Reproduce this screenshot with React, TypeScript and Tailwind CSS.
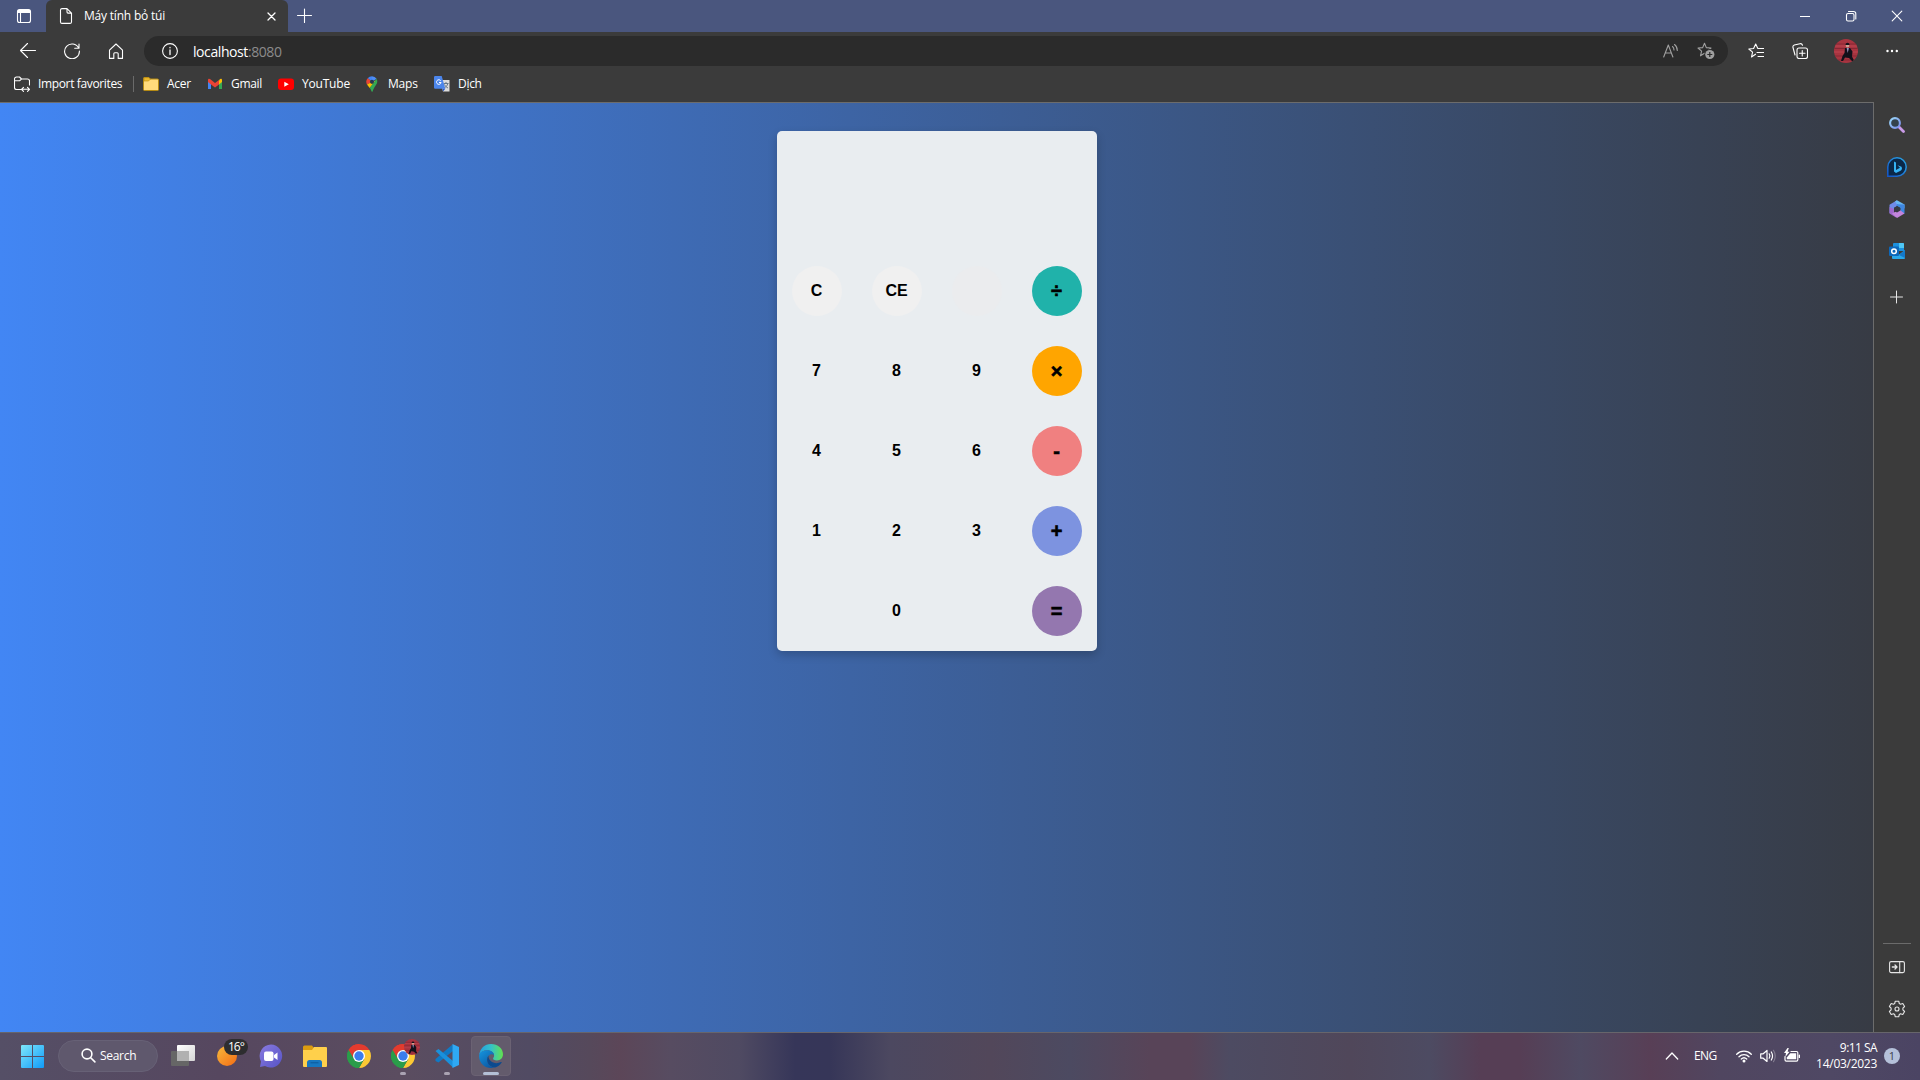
import React from "react";

type IconProps = { className?: string };

const stroke = {
  fill: "none",
  stroke: "currentColor",
  strokeWidth: 1.1,
  strokeLinecap: "round" as const,
  strokeLinejoin: "round" as const,
};

function Svg({ className = "", size = 16, children }: { className?: string; size?: number; children: React.ReactNode }) {
  return (
    <svg className={`shrink-0 ${className}`} width={size} height={size} viewBox={`0 0 ${size} ${size}`}>
      {children}
    </svg>
  );
}

const STAR = "M7.5 1.2 9.3 5.6 14 6 10.4 9.1 11.5 13.8 7.5 11.3 3.5 13.8 4.6 9.1 1 6 5.7 5.6Z";

function Portrait({ className = "" }: IconProps) {
  return (
    <svg className={`shrink-0 ${className}`} viewBox="0 0 24 24">
      <clipPath id="face">
        <circle cx="12" cy="12" r="12" />
      </clipPath>
      <g clipPath="url(#face)">
        <rect width="24" height="24" fill="#a83440" />
        <path d="M0 5h24M0 9.500h24M0 17h24M0 21h24" stroke="#862834" strokeWidth="1" />
        <path d="M0 7h24M0 13h24" stroke="#bd4450" strokeWidth="1" />
        <circle cx="13.500" cy="6.800" r="1.800" fill="#c9a18f" />
        <path d="M11.500 6c0-3 4-3 4 0zM11 9h5l2.500 3.500-.5 5 2 4-1.500 1-3.500-3.500-4-.5-2 3.500H7l1.500-5 2-3z" fill="#11101a" />
        <path d="m12.700 9 1 5 1.200-5z" fill="#9a94c4" />
      </g>
    </svg>
  );
}

function ChromeLogo() {
  return (
    <svg className="size-6 shrink-0" viewBox="0 0 24 24">
      <path d="M12 6h10.390A12 12 0 0 1 12 24l5.200-9z" fill="#fcc934" />
      <path d="M1.610 6 6.800 15 12 12l5.200 3L12 24A12 12 0 0 1 1.610 6z" fill="#2a9d4a" />
      <path d="M1.610 6A12 12 0 0 1 22.390 6H12a6 6 0 0 0-5.200 3v6z" fill="#e33b2e" />
      <path d="M1.610 6 6.800 15V9z" fill="#2a9d4a" />
      <path d="M1.610 6A12 12 0 0 1 12 0v6a6 6 0 0 0-5.500 3.700L6.200 14z" fill="#e33b2e" />
      <path d="M1.610 6 6.800 15 12 24A12 12 0 0 1 1.610 6z" fill="#2a9d4a" />
      <circle cx="12" cy="12" r="6" fill="#fff" />
      <circle cx="12" cy="12" r="4.700" fill="#3b7ded" />
    </svg>
  );
}

function EdgeLogo() {
  return (
    <svg className="size-6 shrink-0" viewBox="0 0 24 24">
      <defs>
        <linearGradient id="edgeTop" x1="0" y1="0.500" x2="1" y2="0.500">
          <stop offset="0" stopColor="#249fe0" />
          <stop offset="0.500" stopColor="#35c1c8" />
          <stop offset="1" stopColor="#62e24d" />
        </linearGradient>
        <linearGradient id="edgeLow" x1="0" y1="0" x2="0.700" y2="1">
          <stop offset="0" stopColor="#1595df" />
          <stop offset="1" stopColor="#0c59a4" />
        </linearGradient>
      </defs>
      <path d="M.2 11C1 4.500 5.500 0 12 0c7 0 12 4.700 12 10.200 0 3.800-2.800 6.200-6 6.200-2.600 0-4.200-1-3.900-1.900.3-.8 1-1.300 1-2.900C15.100 8.500 11.800 6.300 8.200 6.300 4.500 6.300 1.500 8 .2 11Z" fill="url(#edgeTop)" />
      <path d="M.1 12C.2 8.500 4 6.300 8.200 6.300c3.700 0 6.500 2 6.900 4.600C11.500 9 8.300 12 8.300 15.500c0 4.200 3.200 7.500 7 8.100C8 25.500 0 20.500.1 12Z" fill="url(#edgeLow)" />
      <path d="M9.400 11.600c-3.300 5 .3 12 6.700 12 2.500-.6 5-2.500 6.600-5 .2-.5-.2-.7-.6-.5-5.800 2.800-12.700 0-12.700-6.500Z" fill="#0b4a8f" />
    </svg>
  );
}

function TitleBar() {
  return (
    <div className="flex h-8 shrink-0 items-center bg-[#4a567e] text-white">
      <Svg className="ml-4">
        <rect x="1.500" y="1.500" width="13" height="13" rx="2" {...stroke} />
        <path d="M2 2h12v3H2z" fill="currentColor" />
        <path d="M4.500 4v10" {...stroke} />
      </Svg>
      <div className="ml-[14px] flex h-full w-[242px] items-center rounded-t-md bg-[#3b3b3b]">
        <Svg className="ml-3">
          <path d="M2.500 2A1.500 1.500 0 0 1 4 .6h5l4.500 4.500v8.900a1.500 1.500 0 0 1-1.500 1.400H4A1.500 1.500 0 0 1 2.500 14ZM9 .6v3.500a1 1 0 0 0 1 1h3.500" {...stroke} />
        </Svg>
        <span className="ml-[10px] w-[168px] text-xs tracking-[-0.200px]">Máy tính bỏ túi</span>
        <Svg className="ml-[11px]" size={16}>
          <path d="m5 5 7 7M12 5l-7 7" {...stroke} strokeWidth={1.300} />
        </Svg>
      </div>
      <Svg className="ml-[9px]">
        <path d="M7.500 1v13.500M.5 7.500h14" {...stroke} />
      </Svg>
      <div className="flex-1" />
      <div className="flex items-center gap-[30px] pr-[15px]">
        <Svg>
          <path d="M3 8.500h10" {...stroke} strokeLinecap="butt" strokeWidth={1} />
        </Svg>
        <Svg>
          <rect x="3.500" y="5.500" width="7.500" height="7.500" rx="1.500" {...stroke} />
          <path d="M5.500 3.500h5a2.300 2.300 0 0 1 2.300 2.300V11" {...stroke} />
        </Svg>
        <Svg>
          <path d="m3.200 3.200 9.600 9.600M12.800 3.200l-9.600 9.600" {...stroke} />
        </Svg>
      </div>
    </div>
  );
}

function Toolbar() {
  return (
    <div className="flex h-[38px] shrink-0 items-center text-white">
      <Svg className="ml-5">
        <path d="M15.500 7.500H.6M7.500 .5l-7 7 7 7" {...stroke} />
      </Svg>
      <Svg className="ml-7">
        <path d="M14.700 5.200A7.400 7.400 0 1 0 15.400 8M15 1v4.300h-4.300" {...stroke} />
      </Svg>
      <Svg className="ml-7">
        <path d="M1.500 7.200 8 1l6.500 6.200v8.200h-4.300v-4.600a1 1 0 0 0-1-1H6.800a1 1 0 0 0-1 1v4.600H1.500Z" {...stroke} />
      </Svg>
      <div className="ml-5 flex h-[30px] w-[1584px] items-center rounded-full bg-[#2b2b2b]">
        <Svg className="ml-[18px]">
          <circle cx="8" cy="8" r="7.400" {...stroke} />
          <path d="M8 7v4.500M8 4.500v.3" {...stroke} strokeWidth={1.300} />
        </Svg>
        <span className="ml-[15px] flex-1 text-[14px] tracking-[-0.420px]">
          localhost<span className="text-[#8c8c8c]">:8080</span>
        </span>
        <Svg className="-mr-0.5 text-[#a0a0a0]">
          <path d="m.7 14 4.600-12L9.900 14M2.400 10h5.800M9.500 3.500c1.200 1 1.500 2 1.500 3.500M11.500 1.500c2 1.500 2.800 3 2.800 6" {...stroke} />
        </Svg>
        <Svg className="mr-[13px] ml-5 text-[#a0a0a0]" size={18}>
          <path d={STAR} {...stroke} />
          <circle cx="12.800" cy="12.500" r="5.500" fill="#2b2b2b" />
          <circle cx="12.800" cy="12.500" r="4.600" fill="currentColor" />
          <path d="M12.800 10v5M10.300 12.500h5" stroke="#2b2b2b" strokeWidth="1.200" />
        </Svg>
      </div>
      <Svg className="ml-5">
        <path d="M7.500 11.200 3.500 14 4.600 9.200.8 6l4.800-.5L7.700 1l2 4.200M10 5.500h5.700M9 9.500h6.700M10 13.500h5.700" {...stroke} />
      </Svg>
      <Svg className="ml-7">
        <rect x="5" y="5" width="10.500" height="10.500" rx="2" {...stroke} />
        <path d="M10.250 7.500v5.500M7.500 10.250H13M3 12 1 4.500Q.5 2.700 2.300 2L8 .7q1.800-.4 2.500 1.500" {...stroke} />
      </Svg>
      <Portrait className="ml-[26px] size-6" />
      <Svg className="ml-[26px]">
        <path d="M3.500 8h0M8 8h0M12.800 8h0" {...stroke} strokeWidth={2.400} />
      </Svg>
    </div>
  );
}

function BookmarksBar() {
  return (
    <div className="flex h-[29px] shrink-0 items-center pb-px text-xs whitespace-nowrap text-white">
      <Svg className="ml-[14px]">
        <path d="M7 13.500H2.500a2 2 0 0 1-2-2V3a2 2 0 0 1 2-2h3L7.500 3h6a2 2 0 0 1 2 2v4M.5 4.800h5L7.500 3M7.500 13.300h8M9.500 11.300l-2 2 2 2M13.500 11.300l2 2-2 2" {...stroke} />
      </Svg>
      <span className="ml-2 w-[95px] tracking-[-0.360px]">Import favorites</span>
      <div className="h-4 w-px bg-[#6a6a6a]" />
      <Svg className="ml-[9px]">
        <path d="M.5 2.500a1 1 0 0 1 1-1h4l2 1.500h7a1 1 0 0 1 1 1v9.500a1 1 0 0 1-1 1h-13a1 1 0 0 1-1-1z" fill="#ffdb7b" stroke="#b58a13" />
        <path d="M1 5h4.500l2-2-2-1.300H1z" fill="#edb92e" stroke="#b58a13" strokeWidth=".6" />
      </Svg>
      <span className="ml-2 w-10 tracking-[-0.300px]">Acer</span>
      <Svg>
        <path d="M1 4v9h3V6z" fill="#4285f4" />
        <path d="M15 4v9h-3V6z" fill="#34a853" />
        <path d="M12 4.500 13 3q2-.8 2 1v2l-3 2.500z" fill="#fbbc04" />
        <path d="M1 6V4q0-1.800 2-1l5 3.900L12 4v4.500l-4 3-4-3z" fill="#ea4335" />
      </Svg>
      <span className="ml-2 w-[47px] tracking-[-0.300px]">Gmail</span>
      <Svg>
        <rect y="2.500" width="16" height="11.500" rx="3" fill="#f00" />
        <path d="m6.300 5.800 4.500 2.450-4.500 2.450z" fill="#fff" />
      </Svg>
      <span className="ml-2 w-[62px] tracking-[-0.200px]">YouTube</span>
      <Svg>
        <path d="M8 .2a5.600 5.600 0 0 0-4.300 2L8 5.800z" fill="#4285f4" />
        <path d="M3.700 2.200A5.700 5.700 0 0 0 3 8.600L8 5.800z" fill="#ea4335" />
        <path d="M3 8.600 5.700 12 12 4.500 8 5.800z" fill="#fbbc04" />
        <path d="M8 .2a5.600 5.600 0 0 1 4.600 2.500L8 6z" fill="#4d8df5" />
        <path d="M12.600 2.700c2.600 5-2.600 7-3.900 12.600-.2.700-1 .7-1.200 0-.3-1.400-1-2.500-1.800-3.300z" fill="#34a853" />
        <circle cx="8" cy="5.800" r="2.100" fill="#263850" />
      </Svg>
      <span className="ml-2 w-[46px] tracking-[-0.200px]">Maps</span>
      <Svg>
        <path d="M6 4h9.500v11.500H9z" fill="#dcdcdc" />
        <path d="M9.500 7.500h5M12 6v1.500M13.800 7.500c-.5 2.500-2 3.500-3.500 4.200M10.500 8.500c1 2 2 2.700 3.500 3.500" stroke="#66788a" fill="none" />
        <path d="M1.200 0h6.500l3.600 12.800H1.200A1.200 1.200 0 0 1 0 11.600V1.200A1.200 1.200 0 0 1 1.200 0" fill="#4c86ec" />
        <path d="M6.700 4.700a2.300 2.300 0 1 0 .4 1.800H5" stroke="#fff" fill="none" />
        <path d="M8.500 12.800h2.800L9 15.500z" fill="#2858c6" />
      </Svg>
      <span className="ml-2 tracking-[-0.300px]">Dịch</span>
    </div>
  );
}

function Key({ label, tone, op }: { label: string; tone: string; op?: boolean }) {
  return (
    <div className="flex size-20 items-center justify-center">
      <button
        className={`size-[50px] rounded-full text-center leading-[48px] font-bold text-black ${tone} ${op ? "text-[20px] [-webkit-text-stroke:0.6px_black]" : "text-base"}`}
      >
        {label}
      </button>
    </div>
  );
}

const plain = "bg-transparent";
const keys: { label: string; tone: string; op?: boolean }[] = [
  { label: "C", tone: "bg-[#f0f0f0]" },
  { label: "CE", tone: "bg-[#f0f0f0]" },
  { label: "", tone: "bg-[#ebecee]" },
  { label: "÷", tone: "bg-[#20b2aa]", op: true },
  { label: "7", tone: plain },
  { label: "8", tone: plain },
  { label: "9", tone: plain },
  { label: "×", tone: "bg-[#ffa500]", op: true },
  { label: "4", tone: plain },
  { label: "5", tone: plain },
  { label: "6", tone: plain },
  { label: "-", tone: "bg-[#f08080]", op: true },
  { label: "1", tone: plain },
  { label: "2", tone: plain },
  { label: "3", tone: plain },
  { label: "+", tone: "bg-[#7d93e0]", op: true },
  { label: "", tone: plain },
  { label: "0", tone: plain },
  { label: "", tone: plain },
  { label: "=", tone: "bg-[#9477af]", op: true },
];

function Calculator() {
  return (
    <div className="mt-7 h-[520px] w-80 rounded-[5px] bg-[#e9edf0] font-['Liberation_Sans',sans-serif] shadow-[0_4px_10px_rgba(0,0,0,0.2)]">
      <div className="h-[120px]" />
      <div className="grid grid-cols-4">
        {keys.map((k, i) => (
          <Key key={i} {...k} />
        ))}
      </div>
    </div>
  );
}

function Sidebar() {
  return (
    <aside className="flex w-[46px] shrink-0 flex-col items-center pt-[15px] text-[#e6e6e6]">
      <Svg>
        <defs>
          <linearGradient id="lens" x1="0" y1="0" x2="1" y2="1">
            <stop offset="0" stopColor="#9bd8f8" />
            <stop offset="1" stopColor="#7a8bea" />
          </linearGradient>
        </defs>
        <path d="m10 10 4.500 4.500" stroke="#c99be8" strokeWidth="2.800" strokeLinecap="round" />
        <circle cx="6" cy="6" r="4.900" fill="#34424c" stroke="url(#lens)" strokeWidth="2.100" />
      </Svg>
      <Svg className="mt-6" size={20}>
        <defs>
          <linearGradient id="bing" x1="0" y1="1" x2="1" y2="0">
            <stop offset="0" stopColor="#1455c8" />
            <stop offset="1" stopColor="#2aa8e8" />
          </linearGradient>
        </defs>
        <path d="M.8 19.200V10A9.200 9.200 0 1 1 10 19.200z" fill="#0b2848" stroke="url(#bing)" strokeWidth="1.500" />
        <path d="M7 4.500 9 5.500v7.500l4-2.200-2.500-2.500 4 1.500q1.300 2.700-1 4L9 16l-2-1.500z" fill="#35b3f4" />
      </Svg>
      <Svg className="mt-[23px]" size={18}>
        <path d="M1.500 4.800 9 .3v6L6 8v6l-4.500-1z" fill="#6f8ae8" />
        <path d="m7 1.500 2-1.200 7.500 4.300v4L9 4.500z" fill="#68b8f4" />
        <path d="M16.500 4.600v9l-4 .4V8L8 5.500l1-1.300z" fill="#3f86e0" />
        <path d="m1.500 7 4.500 2v4.500l3 1-1 3-6.500-4z" fill="#a068cc" />
        <path d="m4 13.500 7.500-3.700 5 3.700L9 17.900z" fill="#c384dc" />
        <path d="m9 6 3 1.700v3l-3 1.700-3-1.500V7.700z" fill="#363a44" />
      </Svg>
      <Svg className="mt-[25px]">
        <path d="M5 0h9a1 1 0 0 1 1 1v7H4V1a1 1 0 0 1 1-1" fill="#1d91de" />
        <path d="M10 0h4a1 1 0 0 1 1 1v4h-5z" fill="#4fc7f5" />
        <path d="m3 8 6.500 4L16 7v8a1 1 0 0 1-1 1H4a1 1 0 0 1-1-1z" fill="#29a8ea" />
        <path d="m10 12 6-5v8z" fill="#1479ca" />
        <rect y="3.500" width="10" height="9.500" rx="1" fill="#0d68ba" />
        <circle cx="5" cy="8.200" r="2.300" fill="none" stroke="#fff" strokeWidth="1.500" />
      </Svg>
      <Svg className="mt-[30px] -ml-[2px]">
        <path d="M8.500 2v12M2.500 8h12" {...stroke} strokeWidth={1} />
      </Svg>
      <div className="flex-1" />
      <div className="h-px w-7 bg-[#6b6b6b]" />
      <Svg className="mt-[15px] mb-[25px]">
        <rect x=".6" y="2.600" width="14.800" height="11" rx="1.500" {...stroke} />
        <path d="M10.700 2.600v11" {...stroke} />
        <path d="M3.300 8h4.500M6 6l2 2-2 2" {...stroke} strokeWidth={1.300} />
      </Svg>
      <Svg className="mb-[14px]" size={18}>
        <path
          d="M7.300 1.200h3.400l.6 2.300 1.200.7 2.300-.7 1.800 3-1.700 1.700v1.600l1.700 1.700-1.800 3-2.300-.7-1.200.7-.6 2.300H7.300l-.6-2.300-1.200-.7-2.300.7-1.800-3 1.700-1.700V8.200L1.400 6.500l1.800-3 2.300.7 1.200-.7z"
          {...stroke}
        />
        <circle cx="9" cy="9" r="2" {...stroke} />
      </Svg>
    </aside>
  );
}

function Taskbar() {
  return (
    <footer className="flex h-12 shrink-0 items-center border-t border-[#67656b] bg-[linear-gradient(90deg,#554f66_0px,#56475f_220px,#5b4d60_400px,#514b63_530px,#56495b_590px,#5c4658_620px,#574c61_670px,#4f4a62_740px,#363659_795px,#363658_830px,#4c4860_890px,#52475a_990px,#4c4a61_1070px,#584458_1150px,#584458_1190px,#4d4b62_1230px,#50475a_1350px,#4d4b62_1430px,#563e55_1480px,#563e55_1520px,#4f4a62_1580px,#583f56_1650px,#504660_1720px,#4f4864_1830px,#4b4463_1920px)] pb-px text-xs text-white">
      <Svg className="ml-[21px]" size={23}>
        <defs>
          <linearGradient id="win" x1="0" y1="0" x2="23" y2="23" gradientUnits="userSpaceOnUse">
            <stop offset="0" stopColor="#7ee7fb" />
            <stop offset="1" stopColor="#109bf8" />
          </linearGradient>
        </defs>
        <path d="M1 0h10v11H0V1a1 1 0 0 1 1-1M12 0h10a1 1 0 0 1 1 1v10H12zM0 12h11v11H1a1 1 0 0 1-1-1zM12 12h11v10a1 1 0 0 1-1 1H12z" fill="url(#win)" />
      </Svg>
      <div className="ml-[14px] flex h-8 w-[100px] items-center rounded-full border border-[#676176] bg-[#5f586d]">
        <Svg className="ml-[22px]">
          <circle cx="6" cy="6" r="4.900" {...stroke} strokeWidth={1.600} />
          <path d="m9.700 9.700 4.200 4.200" {...stroke} strokeWidth={1.600} />
        </Svg>
        <span className="ml-[3px] tracking-[-0.300px]">Search</span>
      </div>
      <Svg className="ml-[13px]" size={24}>
        <defs>
          <linearGradient id="tv" x1="0" y1="0" x2="1" y2="1">
            <stop offset="0" stopColor="#fff" />
            <stop offset="1" stopColor="#d5d5d5" />
          </linearGradient>
        </defs>
        <rect y="7" width="18" height="15" rx="1" fill="#666" />
        <rect x="6" y="1" width="18" height="16" rx="1" fill="url(#tv)" />
        <rect x="6" y="7" width="12" height="10" fill="#b1b1b1" />
      </Svg>
      <div className="relative ml-[22px] size-5 rounded-full bg-linear-to-br from-[#f5b83b] to-[#f26a12]">
        <span className="absolute top-[-7px] left-[7px] h-4 w-6 rounded-full bg-[#2d2d2f] text-center leading-4 tracking-[-0.900px]">16°</span>
      </div>
      <Svg className="ml-[22px]" size={24}>
        <defs>
          <linearGradient id="chat" x1="0" y1="0" x2="1" y2="1">
            <stop offset="0" stopColor="#8a7be0" />
            <stop offset="1" stopColor="#5653c6" />
          </linearGradient>
        </defs>
        <path d="M12 .5A11.500 11.500 0 1 1 6 22L1 23l1-5.500A11.500 11.500 0 0 1 12 .5" fill="url(#chat)" />
        <rect x="5" y="7.500" width="9.500" height="9.500" rx="2" fill="#fff" />
        <path d="m15 11 3.500-2.500v7.500L15 13.500z" fill="#fff" />
      </Svg>
      <Svg className="ml-5" size={24}>
        <path d="M0 3a1.500 1.500 0 0 1 1.500-1.500H9L11 4v4H0z" fill="#dc9c10" />
        <path d="M0 6h9l2-3h12a1 1 0 0 1 1 1v18a1 1 0 0 1-1 1H1a1 1 0 0 1-1-1z" fill="#ffd04b" />
        <path d="M4 23v-4.500A2.500 2.500 0 0 1 6.500 16h10a2.500 2.500 0 0 1 2.500 2.500V23z" fill="#1777c0" />
        <path d="M7.500 18.800h8" stroke="#0d5a9a" strokeWidth="1" />
      </Svg>
      <div className="ml-5 flex size-6">
        <ChromeLogo />
      </div>
      <div className="relative ml-5 size-6">
        <ChromeLogo />
        <Portrait className="absolute -top-[5px] left-[13px] size-4" />
        <div className="absolute top-[28px] left-[9px] h-[3px] w-1.5 rounded-full bg-[#aaa3b2]" />
      </div>
      <div className="relative ml-5 size-6">
        <Svg size={24}>
          <path d="M17.500.5 18 7 3.500 18.500.5 17v-2z" fill="#1079c4" />
          <path d="m.5 7 3-2L18 17v6.500z" fill="#1a91dc" />
          <path d="M17.500 0 24 3v18l-6.500 3z" fill="#2fa9f3" />
        </Svg>
        <div className="absolute top-[28px] left-[9px] h-[3px] w-1.5 rounded-full bg-[#aaa3b2]" />
      </div>
      <div className="relative ml-3 flex size-10 items-center justify-center rounded border border-[#6b6273] bg-[#635b6c]">
        <EdgeLogo />
        <div className="absolute bottom-0 left-[11px] h-[3px] w-4 rounded-full bg-[#b4c0d6]" />
      </div>
      <div className="flex-1" />
      <Svg>
        <path d="m2.300 11 5.700-6 5.700 6" {...stroke} strokeWidth={1.300} />
      </Svg>
      <span className="ml-[14px] w-[28px] tracking-[-0.600px]">ENG</span>
      <Svg className="ml-[14px]">
        <path d="M.7 6.200a10.300 10.300 0 0 1 14.600 0M3 8.700a7 7 0 0 1 10 0M5.300 11a3.900 3.900 0 0 1 5.400 0" {...stroke} strokeWidth={1.300} />
        <circle cx="8" cy="13" r="1.500" fill="currentColor" />
      </Svg>
      <Svg className="ml-2">
        <path d="M.7 5.800h2.500L7 2.500v11l-3.800-3.300H.7zM9.200 5.800q1.400 2.200 0 4.400M11.300 4q2.500 4 0 8" {...stroke} strokeWidth={1.200} />
        <path d="M13.500 2.300q3.500 5.700 0 11.400" {...stroke} opacity=".3" />
      </Svg>
      <Svg className="ml-2">
        <path d="M7 3.500h5.500a1.300 1.300 0 0 1 1.300 1.300v7a1.300 1.300 0 0 1-1.300 1.300H2.300A1.300 1.300 0 0 1 1 11.800V8.500M15.400 7v2.500" {...stroke} strokeWidth={1.200} />
        <path d="M6.300 5.300h5.900v6H2.800V9.500z" fill="currentColor" />
        <path d="M3.500 0 0 5h2l-.7 4L5.600 3.700h-2L4.800 0z" fill="currentColor" />
      </Svg>
      <div className="w-[77px] text-right leading-4 tracking-[-0.280px]">
        <div className="tracking-[-0.550px]">9:11 SA</div>
        <div>14/03/2023</div>
      </div>
      <div className="mr-5 ml-[7px] size-4 rounded-full bg-[#b5c1da] text-center text-[11px] leading-4 text-[#3b3f50]">1</div>
    </footer>
  );
}

export default function App() {
  return (
    <div className="flex h-[1080px] w-[1920px] flex-col overflow-hidden bg-[#3b3b3b] font-['Open_Sans','Noto_Sans',sans-serif]">
      <TitleBar />
      <Toolbar />
      <BookmarksBar />
      <div className="h-[3px] shrink-0" />
      <div className="flex min-h-0 flex-1">
        <main className="flex flex-1 items-start justify-center border-t border-r border-[#6c6c6c] bg-[linear-gradient(90deg,#4286f4,#373b44)]">
          <Calculator />
        </main>
        <Sidebar />
      </div>
      <Taskbar />
    </div>
  );
}
